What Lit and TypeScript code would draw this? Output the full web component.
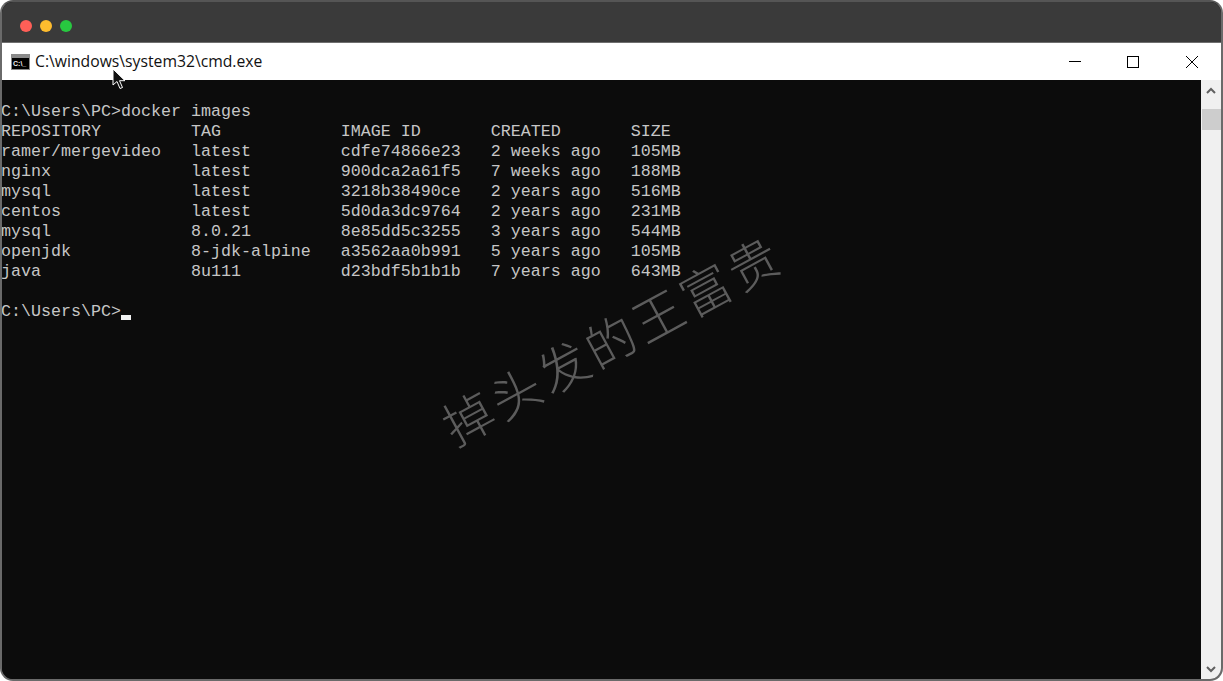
import { LitElement, html, css } from "lit";
import { customElement } from "lit/decorators.js";

const LINES = [
  "",
  "C:\\Users\\PC>docker images",
  "REPOSITORY         TAG            IMAGE ID       CREATED       SIZE",
  "ramer/mergevideo   latest         cdfe74866e23   2 weeks ago   105MB",
  "nginx              latest         900dca2a61f5   7 weeks ago   188MB",
  "mysql              latest         3218b38490ce   2 years ago   516MB",
  "centos             latest         5d0da3dc9764   2 years ago   231MB",
  "mysql              8.0.21         8e85dd5c3255   3 years ago   544MB",
  "openjdk            8-jdk-alpine   a3562aa0b991   5 years ago   105MB",
  "java               8u111          d23bdf5b1b1b   7 years ago   643MB",
  "",
];

@customElement("app-root")
export class AppRoot extends LitElement {
  static styles = css`
    :host { display: block; width: 1223px; height: 681px; background: #fff; overflow: hidden; }
    .window {
      position: relative; box-sizing: border-box; width: 1223px; height: 681px;
      display: flex; flex-direction: column; overflow: hidden;
      border: 2px solid #6a6a6a; border-top-color: #555;
      border-radius: 13px; background: #0c0c0c;
    }
    .mac {
      height: 41px; flex: none; box-sizing: border-box; background: #3a3a3a;
      display: flex; align-items: center; gap: 8px; padding: 14px 0 6px 18px;
      border-bottom: 1px solid #6f6f6f;
    }
    .dot { width: 12px; height: 12px; border-radius: 50%; }
    .red { background: #ff5f57; } .yellow { background: #febc2e; } .green { background: #28c840; }
    .titlebar {
      height: 37px; flex: none; background: #fff; display: flex; align-items: center;
      padding-left: 11px; margin-left: -2px; margin-right: -2px; padding-right: 2px;
    }
    .appicon { width: 19px; height: 16px; margin-right: 5px; flex: none; }
    .title { flex: 1; font: 15.72px "Open Sans", "Noto Sans", sans-serif; color: #111; white-space: nowrap; padding-bottom: 1px; }
    .controls { display: flex; flex: none; }
    .ctl { width: 58.5px; height: 37px; display: flex; align-items: center; justify-content: center; }
    .ctl svg { width: 14px; height: 14px; }
    .main { flex: 1; display: flex; min-height: 0; }
    .console {
      flex: 1; margin: 0 0 0 -1px; padding-top: 2px; background: #0c0c0c; color: #c6c6c6;
      font: 16.67px/20px "Liberation Mono", "DejaVu Sans Mono", monospace;
      white-space: pre; overflow: hidden;
    }
    .prompt { display: flex; }
    .caret { display: inline-block; width: 10px; height: 5px; background: #f2f2f2; align-self: flex-end; margin-bottom: 2px; }
    .scroll { width: 20px; flex: none; background: #f0f0f0; display: flex; flex-direction: column; align-items: center; }
    .arrow { width: 20px; height: 20px; flex: none; display: flex; align-items: center; justify-content: center; }
    .arrow svg { width: 10px; height: 7px; }
    .thumb { width: 19px; height: 21px; background: #cdcdcd; margin-top: 9px; flex: none; }
    .spacer { flex: 1; }
    .watermark {
      position: absolute; left: 443px; top: 396px; transform: rotate(-28.5deg); transform-origin: 0 50%;
      font: 300 50px/60px "Noto Sans CJK SC", sans-serif; letter-spacing: 4px; color: #5c5c5c;
      white-space: nowrap; pointer-events: none;
    }
    .pointer { position: absolute; left: 110px; top: 66px; width: 14px; height: 22px; pointer-events: none; }
  `;

  render() {
    return html`
      <div class="window">
        <div class="mac">
          <span class="dot red"></span><span class="dot yellow"></span><span class="dot green"></span>
        </div>
        <div class="titlebar">
          <svg class="appicon" viewBox="0 0 19 16">
            <rect width="19" height="16" fill="#8a8a8a"/>
            <rect x="1" y="4" width="17" height="11" fill="#000"/>
            <text x="2" y="12" font-family="Liberation Sans" font-size="7" font-weight="700" fill="#eee">C:\\_</text>
          </svg>
          <span class="title">C:\\windows\\system32\\cmd.exe</span>
          <div class="controls">
            <div class="ctl"><svg viewBox="0 0 14 14"><path d="M1 6.5h12" stroke="#000" fill="none"/></svg></div>
            <div class="ctl"><svg viewBox="0 0 14 14"><rect x="1.5" y="1.5" width="11" height="11" stroke="#000" fill="none"/></svg></div>
            <div class="ctl"><svg viewBox="0 0 14 14"><path d="M1 1l12 12M13 1L1 13" stroke="#000" fill="none"/></svg></div>
          </div>
        </div>
        <div class="main">
          <div class="console">${LINES.map((l) => html`<div>${l || " "}</div>`)}<div class="prompt"><span>C:\\Users\\PC&gt;</span><span class="caret"></span></div></div>
          <div class="scroll">
            <div class="arrow"><svg viewBox="0 0 10 7"><path d="M1 6l4-4 4 4" stroke="#606060" stroke-width="2" fill="none"/></svg></div>
            <div class="thumb"></div>
            <div class="spacer"></div>
            <div class="arrow"><svg viewBox="0 0 10 7"><path d="M1 1l4 4 4-4" stroke="#606060" stroke-width="2" fill="none"/></svg></div>
          </div>
        </div>
        <div class="watermark">掉头发的王富贵</div>
        <svg class="pointer" viewBox="0 0 14 22">
          <path d="M1 1v16l4-3.500 3 7 2.500-1-3-6.800h5.500z" fill="#111" stroke="#fff" stroke-width="1"/>
        </svg>
      </div>
    `;
  }
}
